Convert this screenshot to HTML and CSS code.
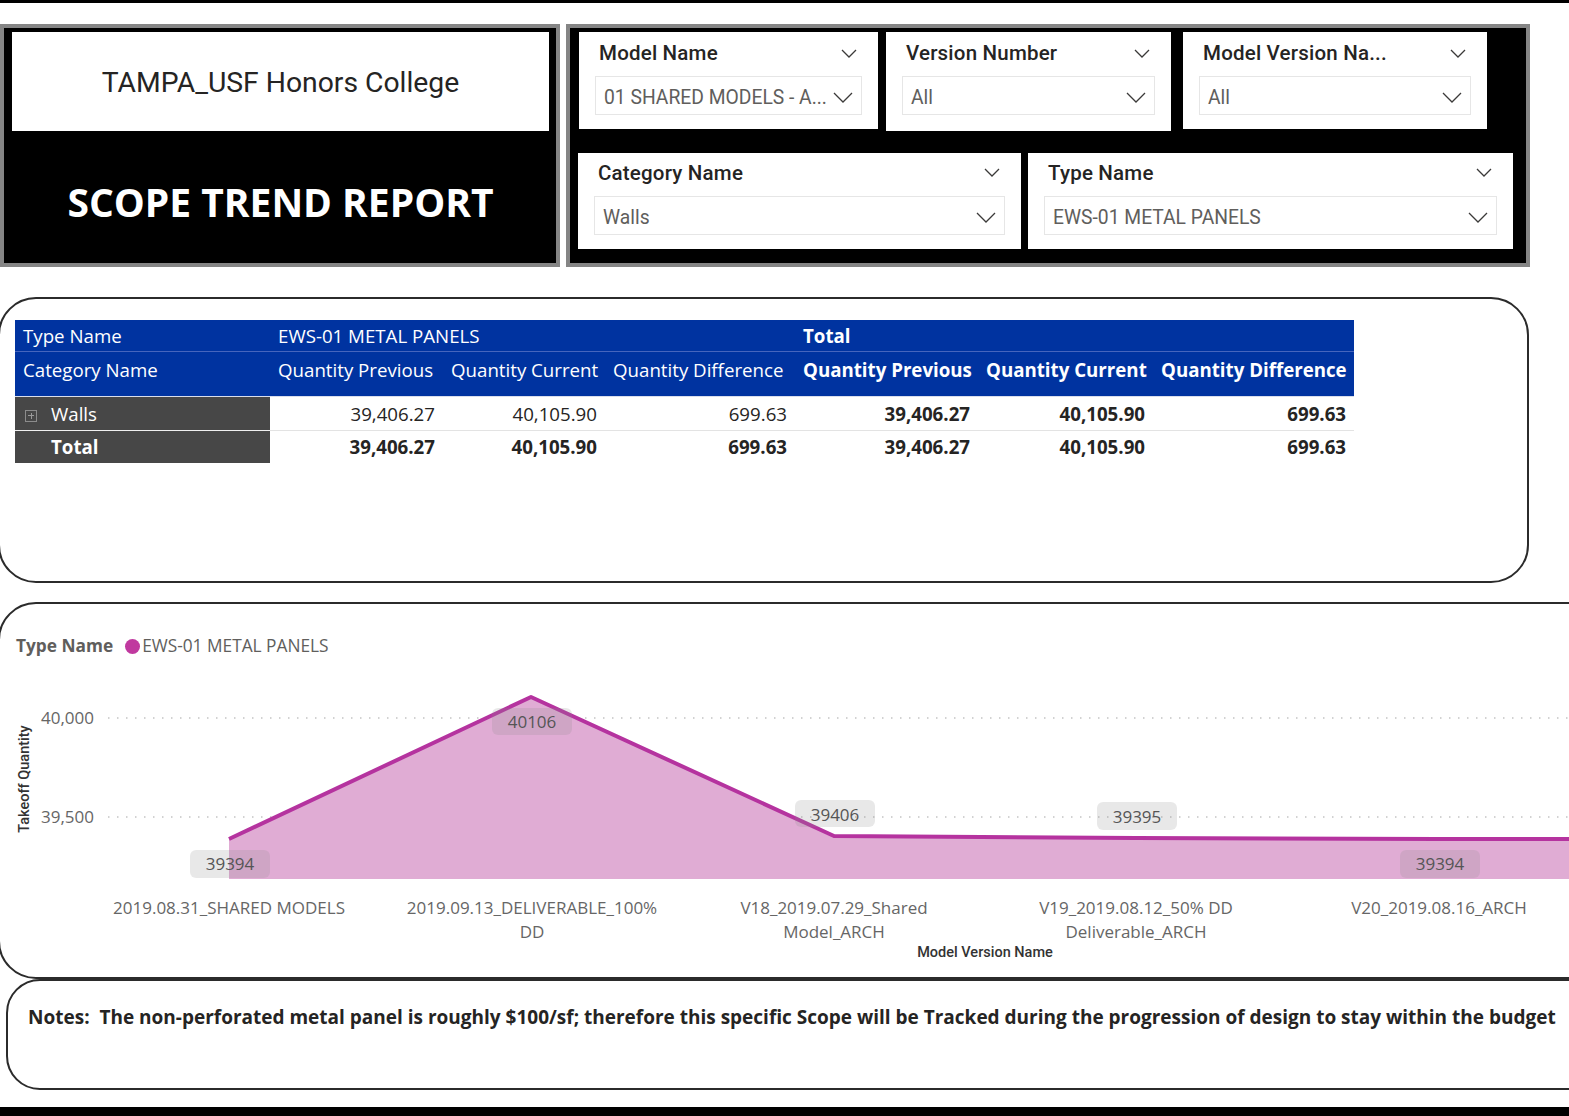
FILE: index.html
```html
<!DOCTYPE html>
<html lang="en">
<head>
<meta charset="utf-8">
<title>Scope Trend Report</title>
<link rel="stylesheet" href="styles.css">
</head>
<body>
<div class="topbar"></div>

<div class="header">
  <div class="title-panel">
    <div class="title-box">TAMPA_USF Honors College</div>
    <div class="report-title">SCOPE TREND REPORT</div>
  </div>

  <div class="filter-panel">
    <div class="slicer-row row1">
      <div class="slicer s-model">
        <div class="slicer-head"><span>Model Name</span>
          <svg class="chev-sm" viewBox="0 0 16 9"><polyline points="1,1 8,8 15,1"/></svg></div>
        <div class="dropdown"><span>01 SHARED MODELS - A...</span>
          <svg class="chev" viewBox="0 0 20 11"><polyline points="1,1 10,10 19,1"/></svg></div>
      </div>
      <div class="slicer s-version">
        <div class="slicer-head"><span>Version Number</span>
          <svg class="chev-sm" viewBox="0 0 16 9"><polyline points="1,1 8,8 15,1"/></svg></div>
        <div class="dropdown"><span>All</span>
          <svg class="chev" viewBox="0 0 20 11"><polyline points="1,1 10,10 19,1"/></svg></div>
      </div>
      <div class="slicer s-mvname">
        <div class="slicer-head"><span>Model Version Na...</span>
          <svg class="chev-sm" viewBox="0 0 16 9"><polyline points="1,1 8,8 15,1"/></svg></div>
        <div class="dropdown"><span>All</span>
          <svg class="chev" viewBox="0 0 20 11"><polyline points="1,1 10,10 19,1"/></svg></div>
      </div>
    </div>
    <div class="slicer-row row2">
      <div class="slicer s-category">
        <div class="slicer-head"><span>Category Name</span>
          <svg class="chev-sm" viewBox="0 0 16 9"><polyline points="1,1 8,8 15,1"/></svg></div>
        <div class="dropdown"><span>Walls</span>
          <svg class="chev" viewBox="0 0 20 11"><polyline points="1,1 10,10 19,1"/></svg></div>
      </div>
      <div class="slicer s-type">
        <div class="slicer-head"><span>Type Name</span>
          <svg class="chev-sm" viewBox="0 0 16 9"><polyline points="1,1 8,8 15,1"/></svg></div>
        <div class="dropdown"><span>EWS-01 METAL PANELS</span>
          <svg class="chev" viewBox="0 0 20 11"><polyline points="1,1 10,10 19,1"/></svg></div>
      </div>
    </div>
  </div>
</div>

<div class="card table-card">
  <table class="matrix">
    <colgroup>
      <col style="width:255px"><col style="width:173px"><col style="width:162px"><col style="width:190px">
      <col style="width:183px"><col style="width:175px"><col style="width:201px">
    </colgroup>
    <thead>
      <tr class="h1">
        <th>Type Name</th>
        <th colspan="3">EWS-01 METAL PANELS</th>
        <th colspan="3" class="b">Total</th>
      </tr>
      <tr class="h2">
        <th>Category Name</th>
        <th>Quantity Previous</th>
        <th>Quantity Current</th>
        <th>Quantity Difference</th>
        <th class="b">Quantity Previous</th>
        <th class="b">Quantity Current</th>
        <th class="b">Quantity Difference</th>
      </tr>
    </thead>
    <tbody>
      <tr class="r-walls">
        <td class="cat"><span class="expand"></span>Walls</td>
        <td>39,406.27</td>
        <td>40,105.90</td>
        <td>699.63</td>
        <td class="b">39,406.27</td>
        <td class="b">40,105.90</td>
        <td class="b">699.63</td>
      </tr>
      <tr class="r-total">
        <td class="cat b"><span class="expand blank"></span>Total</td>
        <td class="b">39,406.27</td>
        <td class="b">40,105.90</td>
        <td class="b">699.63</td>
        <td class="b">39,406.27</td>
        <td class="b">40,105.90</td>
        <td class="b">699.63</td>
      </tr>
    </tbody>
  </table>
</div>

<div class="card chart-card">
  <div class="legend">
    <span class="legend-title">Type Name</span>
    <span class="legend-dot"></span>
    <span class="legend-item">EWS-01 METAL PANELS</span>
  </div>
  <svg class="chart" width="1600" height="320" viewBox="0 0 1600 320">
    <line class="grid" x1="108" y1="62" x2="1600" y2="62"/>
    <line class="grid" x1="108" y1="161" x2="1600" y2="161"/>
    <text class="ytick" x="94" y="68" text-anchor="end">40,000</text>
    <text class="ytick" x="94" y="167" text-anchor="end">39,500</text>
    <text class="ytitle" transform="translate(29,123) rotate(-90)" text-anchor="middle">Takeoff Quantity</text>

    <polygon class="area" points="229,223 229,183 531,41 834,180 1136,182 1438,183 1600,183 1600,223"/>
    <polyline class="line" points="229,183 531,41 834,180 1136,182 1438,183 1600,183"/>

    <rect class="dlabel" x="190" y="194" width="80" height="28" rx="6"/>
    <text class="dtext" x="230" y="214" text-anchor="middle">39394</text>
    <rect class="dlabel" x="492" y="52" width="80" height="27" rx="6"/>
    <text class="dtext" x="532" y="72" text-anchor="middle">40106</text>
    <rect class="dlabel" x="795" y="144" width="80" height="27" rx="6"/>
    <text class="dtext" x="835" y="165" text-anchor="middle">39406</text>
    <rect class="dlabel" x="1097" y="146" width="80" height="28" rx="6"/>
    <text class="dtext" x="1137" y="167" text-anchor="middle">39395</text>
    <rect class="dlabel" x="1400" y="194" width="80" height="28" rx="6"/>
    <text class="dtext" x="1440" y="214" text-anchor="middle">39394</text>

    <text class="xtick" x="229" y="258" text-anchor="middle">2019.08.31_SHARED MODELS</text>
    <text class="xtick" x="532" y="258" text-anchor="middle">2019.09.13_DELIVERABLE_100%</text>
    <text class="xtick" x="532" y="282" text-anchor="middle">DD</text>
    <text class="xtick" x="834" y="258" text-anchor="middle">V18_2019.07.29_Shared</text>
    <text class="xtick" x="834" y="282" text-anchor="middle">Model_ARCH</text>
    <text class="xtick" x="1136" y="258" text-anchor="middle">V19_2019.08.12_50% DD</text>
    <text class="xtick" x="1136" y="282" text-anchor="middle">Deliverable_ARCH</text>
    <text class="xtick" x="1439" y="258" text-anchor="middle">V20_2019.08.16_ARCH</text>
    <text class="xtitle" x="985" y="301" text-anchor="middle">Model Version Name</text>
  </svg>
</div>

<div class="card notes-card">
  <p class="notes">Notes:&nbsp; The non-perforated metal panel is roughly $100/sf; therefore this specific Scope will be Tracked during the progression of design to stay within the budget</p>
</div>

<div class="bottombar"></div>
</body>
</html>
```

FILE: styles.css
```css
* { box-sizing: border-box; }

html, body {
  margin: 0;
  padding: 0;
  background: #ffffff;
  width: 1569px;
  height: 1116px;
  overflow: hidden;
  font-family: "Open Sans", "Noto Sans", sans-serif;
  color: #252423;
}

.topbar {
  height: 3px;
  background: #000;
}

/* ---------- header ---------- */
.header {
  display: flex;
  gap: 6px;
  margin-top: 21px;
  height: 243px;
}

.title-panel {
  width: 560px;
  height: 243px;
  border: 4px solid #858585;
  background: #000;
  padding: 4px 7px 0 8px;
  display: flex;
  flex-direction: column;
}

.title-box {
  height: 99px;
  background: #fff;
  display: flex;
  align-items: center;
  justify-content: center;
  font-family: Roboto, "DejaVu Sans", sans-serif;
  font-size: 28.3px;
  color: #252423;
  padding-top: 2px;
}

.report-title {
  flex: 1;
  display: flex;
  align-items: center;
  justify-content: center;
  padding-top: 8px;
  color: #fff;
  font-family: "Open Sans", sans-serif;
  font-weight: 700;
  font-size: 39px;
}

.filter-panel {
  width: 964px;
  height: 243px;
  border: 4px solid #858585;
  background: #000;
  padding-top: 4px;
  display: flex;
  flex-direction: column;
  gap: 22px;
}

.slicer-row {
  display: flex;
  align-items: flex-start;
}

.row1 { padding-left: 9px; }
.row2 { padding-left: 8px; gap: 7px; }

.slicer {
  background: #fff;
  padding: 0 16px;
  font-family: Roboto, "DejaVu Sans", sans-serif;
}

.row1 .slicer { height: 97px; }
.row2 .slicer { height: 96px; }

.s-model { width: 299px; margin-right: 8px; }
.s-version { width: 285px; height: 99px !important; margin-right: 12px; }
.s-mvname { width: 304px; }
.s-category { width: 443px; }
.s-type { width: 485px; }

.slicer-head {
  height: 44px;
  display: flex;
  align-items: center;
  justify-content: space-between;
  padding: 0 5px 2px 4px;
  font-size: 20.5px;
  font-weight: 500;
  color: #252423;
  letter-spacing: 0.2px;
}

.row2 .slicer-head {
  height: 43px;
  padding-bottom: 4px;
}

.chev-sm {
  width: 16px;
  height: 9px;
  fill: none;
  stroke: #3b3a39;
  stroke-width: 1.3;
}

.dropdown {
  height: 39px;
  border: 1px solid #e6e6e6;
  display: flex;
  align-items: center;
  justify-content: space-between;
  padding: 3px 8px 0 8px;
  font-size: 19.3px;
  color: #605e5c;
}

.chev {
  width: 20px;
  height: 11px;
  fill: none;
  stroke: #3b3a39;
  stroke-width: 1.3;
}

/* ---------- cards ---------- */
.card {
  border: 2px solid #2b2b2b;
  background: #fff;
}

.table-card {
  margin-top: 30px;
  margin-left: -2px;
  width: 1531px;
  height: 286px;
  border-radius: 38px;
  padding: 21px 0 0 15px;
}

.matrix {
  border-collapse: collapse;
  table-layout: fixed;
  width: 1339px;
  font-family: "Open Sans", sans-serif;
  font-size: 18.7px;
}

.matrix th {
  background: #0033a0;
  color: #fff;
  font-weight: 400;
  text-align: left;
  padding: 0 8px;
  white-space: nowrap;
  overflow: hidden;
}

.matrix .h1 th {
  height: 31px;
  border-bottom: 1px solid #4665bd;
}

.matrix .h2 th {
  height: 45px;
  vertical-align: top;
  padding-top: 5px;
  border-bottom: 1px solid #d9deec;
}

.matrix .b { font-weight: 700; }

.matrix td {
  text-align: right;
  padding: 0 8px;
  white-space: nowrap;
  color: #252423;
}

.matrix .r-walls td {
  height: 34px;
  border-bottom: 1px solid #e3e3e3;
}

.matrix .r-total td {
  height: 33px;
}

.matrix td.cat {
  background: #474747;
  color: #fff;
  text-align: left;
  padding-left: 10px;
}

.matrix .r-walls td.cat {
  border-bottom: 1px solid #f0f0f0;
}

.expand {
  display: inline-block;
  width: 12px;
  height: 12px;
  border: 1px solid #8c8c8c;
  margin-right: 14px;
  position: relative;
  vertical-align: -1px;
}

.expand::before,
.expand::after {
  content: "";
  position: absolute;
  background: #9a9a9a;
}

.expand::before { left: 2px; right: 2px; top: 4.5px; height: 1px; }
.expand::after { top: 2px; bottom: 2px; left: 4.5px; width: 1px; }

.expand.blank { border-color: transparent; }
.expand.blank::before,
.expand.blank::after { display: none; }

/* ---------- chart ---------- */
.chart-card {
  margin-top: 19px;
  margin-left: -2px;
  width: 1640px;
  height: 377px;
  border-radius: 38px;
  overflow: hidden;
}

.legend {
  height: 52px;
  padding: 32px 0 0 16px;
  display: flex;
  align-items: center;
  font-size: 17.3px;
  color: #605e5c;
  line-height: 20px;
}

.legend-title {
  font-weight: 700;
  margin-right: 12px;
}

.legend-dot {
  width: 15px;
  height: 15px;
  border-radius: 50%;
  background: #c0399f;
  margin-right: 2px;
}

.chart {
  display: block;
}

.grid {
  stroke: #c4c4c4;
  stroke-width: 1.5;
  stroke-dasharray: 1.5 7.5;
}

.ytick {
  font-family: "Open Sans", sans-serif;
  font-size: 17px;
  fill: #666;
}

.ytitle {
  font-family: Roboto, sans-serif;
  font-weight: 500;
  font-size: 14.5px;
  fill: #333;
}

.area {
  fill: #e0acd4;
}

.line {
  fill: none;
  stroke: #b5339f;
  stroke-width: 4;
  stroke-linejoin: round;
}

.dlabel {
  fill: #8a8a8a;
  fill-opacity: 0.2;
}

.dtext {
  font-family: "Open Sans", sans-serif;
  font-size: 17px;
  fill: #555;
}

.xtick {
  font-family: "Open Sans", sans-serif;
  font-size: 17px;
  fill: #666;
}

.xtitle {
  font-family: Roboto, sans-serif;
  font-weight: 500;
  font-size: 14.5px;
  fill: #333;
}

/* ---------- notes ---------- */
.notes-card {
  margin-left: 6px;
  width: 1640px;
  height: 111px;
  border-radius: 34px;
  padding: 23px 0 0 20px;
}

.notes {
  margin: 0;
  font-family: "Open Sans", sans-serif;
  font-weight: 700;
  font-size: 19px;
  color: #252423;
  white-space: nowrap;
}

.bottombar {
  margin-top: 17px;
  height: 20px;
  background: #000;
}
```
